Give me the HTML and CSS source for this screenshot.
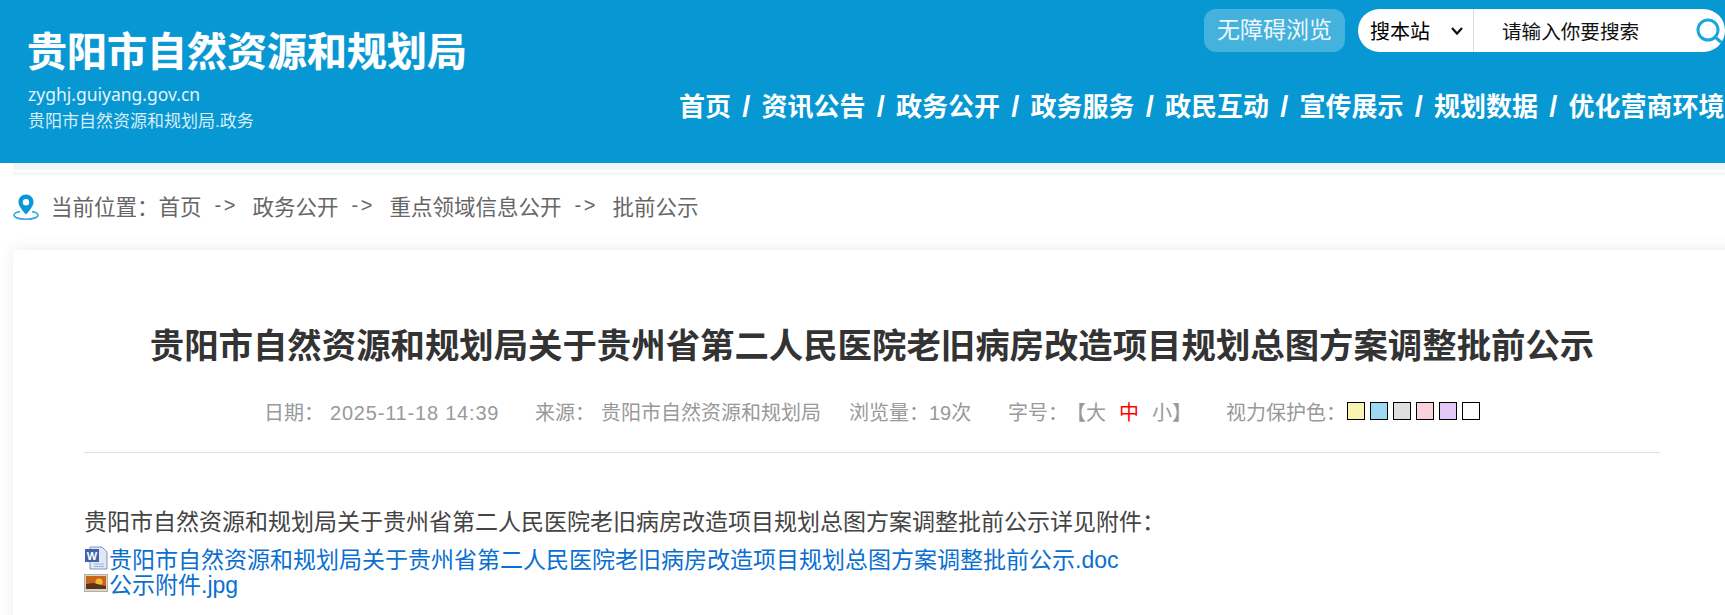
FILE: index.html
```html
<!DOCTYPE html>
<html lang="zh-CN">
<head>
    <meta charset="UTF-8">
    <meta name="viewport" content="width=device-width, initial-scale=1.0">
    <title>贵阳市自然资源和规划局</title>
    <link rel="stylesheet" href="styles.css">
</head>
<body>

<div class="header">
    <div class="logo">
        <div class="logo-name">贵阳市自然资源和规划局</div>
        <div class="logo-url">zyghj.guiyang.gov.cn</div>
        <div class="logo-sub">贵阳市自然资源和规划局.政务</div>
    </div>
    <div class="header-right">
        <div class="tools">
            <a class="access-btn">无障碍浏览</a>
            <div class="search">
                <select class="search-scope">
                    <option>搜本站</option>
                </select>
                <svg class="chevron" width="14" height="10" viewBox="0 0 14 10">
                    <path d="M2 2 L7 7.5 L12 2" fill="none" stroke="#111" stroke-width="2.2"/>
                </svg>
                <input class="search-input" type="text" placeholder="请输入你要搜索">
                <svg class="search-icon" width="30" height="30" viewBox="0 0 30 30">
                    <circle cx="13" cy="14" r="10" fill="none" stroke="#1ba6de" stroke-width="3"/>
                    <path d="M20 21 L27 27" stroke="#1ba6de" stroke-width="3" stroke-linecap="round"/>
                </svg>
            </div>
        </div>
        <div class="nav">
            <a>首页</a><i>/</i>
            <a>资讯公告</a><i>/</i>
            <a>政务公开</a><i>/</i>
            <a>政务服务</a><i>/</i>
            <a>政民互动</a><i>/</i>
            <a>宣传展示</a><i>/</i>
            <a>规划数据</a><i>/</i>
            <a>优化营商环境</a>
        </div>
    </div>
</div>

<div class="stripes"></div>

<div class="crumbs">
    <svg class="pin" width="26" height="26" viewBox="0 0 26 26">
        <path d="M13 0.5 C8.6 0.5 5.5 3.8 5.5 8 C5.5 12.4 10.4 17.6 13 20.5 C15.6 17.6 20.5 12.4 20.5 8 C20.5 3.8 17.4 0.5 13 0.5 Z M13 5 A3.2 3.2 0 1 1 13 11.4 A3.2 3.2 0 1 1 13 5 Z" fill="#0a98d6" fill-rule="evenodd"/>
        <path d="M7 17.5 C3.4 18.3 1 19.6 1 21.2 C1 23.6 6.4 25.2 13 25.2 C19.6 25.2 25 23.6 25 21.2 C25 19.6 22.6 18.3 19 17.5" fill="none" stroke="#2fa9de" stroke-width="1.6"/>
    </svg>
    <span>当前位置：</span><a>首页</a>
    <span class="arrow">-&gt;</span><a>政务公开</a>
    <span class="arrow">-&gt;</span><a>重点领域信息公开</a>
    <span class="arrow">-&gt;</span><a>批前公示</a>
</div>

<div class="card">
    <h1 class="title">贵阳市自然资源和规划局关于贵州省第二人民医院老旧病房改造项目规划总图方案调整批前公示</h1>
    <div class="meta">
        <span class="date"><em>日期：</em><u>2025-11-18 14:39</u></span>
        <span class="source"><em>来源：</em>贵阳市自然资源和规划局</span>
        <span class="views">浏览量：19次</span>
        <span class="size"><em>字号：</em>【大<b>中</b>小】</span>
        <span class="eye">视力保护色：</span>
        <div class="swatches">
            <a class="swatch yellow"></a>
            <a class="swatch blue"></a>
            <a class="swatch grey"></a>
            <a class="swatch pink"></a>
            <a class="swatch purple"></a>
            <a class="swatch white"></a>
        </div>
    </div>
    <p class="intro">贵阳市自然资源和规划局关于贵州省第二人民医院老旧病房改造项目规划总图方案调整批前公示详见附件：</p>
    <div class="files">
        <div class="file">
            <svg width="24" height="24" viewBox="0 0 24 24">
                <path d="M6 1 H18 L23 6 V23 H6 Z" fill="#dfe8f5" stroke="#7f95bd"/>
                <path d="M10 18 H20 M10 20.5 H20" stroke="#9fb3d4"/>
                <rect x="1" y="3" width="14" height="13" fill="#3f62ab"/>
                <text class="word-mark" x="8" y="13.5" text-anchor="middle">W</text>
            </svg>
            <a>贵阳市自然资源和规划局关于贵州省第二人民医院老旧病房改造项目规划总图方案调整批前公示.doc</a>
        </div>
        <div class="file">
            <svg width="24" height="18" viewBox="0 0 24 18">
                <rect x="0.5" y="0.5" width="23" height="17" fill="#d9d5cc" stroke="#b3b0a8"/>
                <rect x="2" y="2" width="20" height="13" fill="#c9661c"/>
                <circle cx="15" cy="8" r="3.5" fill="#f7b93a"/>
                <path d="M2 15 V10 L9 9 L22 12 V15 Z" fill="#5a3418"/>
            </svg>
            <a>公示附件.jpg</a>
        </div>
    </div>
</div>

</body>
</html>
```

FILE: styles.css
```css
html, body {
    height: 100%;
    overflow: hidden;
}
body {
    margin: 0;
    background-color: #fff;
    font-family: "Liberation Sans", "Noto Sans CJK SC", sans-serif;
    color: #333;
}
a {
    text-decoration: none;
}

/* header */
.header {
    display: flex;
    justify-content: space-between;
    height: 163px;
    background-color: #0797d2;
    color: #fff;
    overflow: hidden;
}
.logo {
    padding: 27px 0 0 27px;
}
.logo-name {
    font-size: 40px;
    line-height: 50px;
    font-weight: 700;
    white-space: nowrap;
    text-shadow: 0 0 1px rgba(255, 255, 255, 0.7);
}
.logo-url {
    margin: 5px 0 0 1px;
    font-family: "Noto Sans", sans-serif;
    font-size: 17.5px;
    line-height: 24px;
    color: #e4f4fb;
}
.logo-sub {
    margin: 4px 0 0 1px;
    font-size: 17px;
    line-height: 24px;
    color: #d5eef9;
}
.header-right {
    flex: none;
    width: 1046px;
}
.tools {
    display: flex;
    gap: 13px;
    margin: 9px 0 0 525px;
}
.access-btn {
    flex: none;
    width: 141px;
    height: 43px;
    line-height: 43px;
    text-align: center;
    font-size: 23px;
    color: #eef8fc;
    background-color: rgba(255, 255, 255, 0.25);
    border-radius: 12px;
}
.search {
    flex: none;
    display: flex;
    align-items: center;
    width: 367px;
    height: 43px;
    background-color: #fff;
    border-radius: 22px;
    overflow: hidden;
}
.search-scope {
    flex: none;
    width: 92px;
    height: 43px;
    padding-left: 12px;
    border: none;
    background-color: transparent;
    appearance: none;
    font-family: "Noto Sans CJK SC", sans-serif;
    font-size: 20px;
    color: #000;
}
.chevron {
    flex: none;
    margin-right: 9px;
}
.search-input {
    flex: none;
    width: 220px;
    height: 43px;
    padding: 0 0 0 28px;
    box-sizing: border-box;
    border: none;
    border-left: 1px solid #ddd;
    font-family: "Noto Sans CJK SC", sans-serif;
    font-size: 19.6px;
    color: #000;
}
.search-input::placeholder {
    color: #111;
}
.search-icon {
    flex: none;
    margin-left: 2px;
}
.nav {
    display: flex;
    align-items: center;
    margin-top: 37px;
    font-size: 26px;
    line-height: 36px;
    font-weight: 700;
    white-space: nowrap;
}
.nav i {
    width: 30.5px;
    text-align: center;
    font-style: normal;
    font-size: 29px;
}

/* strip under the header */
.stripes {
    height: 7px;
    margin-left: 13px;
    background-color: #f2f5f8;
    border-bottom: 2px solid #fff;
    box-shadow: 0 3px 0 #f5f6f8;
}

/* breadcrumb */
.crumbs {
    display: flex;
    align-items: center;
    box-sizing: border-box;
    height: 78px;
    padding: 0 0 12px 13px;
    font-size: 21.5px;
    color: #666;
    white-space: nowrap;
}
.pin {
    margin: 3px 12px 0 0;
}
.arrow {
    margin: 0 15px 0 13px;
    width: 23px;
    font-size: 20px;
    letter-spacing: 2.5px;
}

/* article */
.card {
    margin: 0 -20px 0 13px;
    padding: 71px 85px 0 71px;
    min-height: 400px;
    background-color: #fff;
    box-shadow: 0 0 14px rgba(60, 90, 160, 0.12);
}
.title {
    margin: 0;
    width: 1576px;
    text-align: center;
    font-size: 34.4px;
    line-height: 50px;
    font-weight: 700;
    color: #333;
    white-space: nowrap;
}
.meta {
    display: flex;
    align-items: center;
    width: 1576px;
    height: 82px;
    padding: 2px 0 3px 180px;
    box-sizing: border-box;
    border-bottom: 1px solid #ddd;
    font-size: 20px;
    color: #999;
    white-space: nowrap;
}
.meta em {
    font-style: normal;
    margin-right: 6px;
}
.meta u {
    text-decoration: none;
    letter-spacing: 0.8px;
}
.meta .date {
    width: 271px;
}
.meta .source {
    width: 314px;
}
.meta .views {
    width: 159px;
}
.meta .size {
    width: 218px;
}
.meta .size em {
    margin-right: 8px;
}
.meta b {
    margin: 0 13px;
    font-weight: 400;
    color: #f00;
}
.meta .eye {
    width: 121px;
}
.swatches {
    display: flex;
    gap: 5px;
}
.swatch {
    width: 16px;
    height: 16px;
    border: 1px solid #000;
}
.yellow {
    background-color: #f8f5b0;
}
.blue {
    background-color: #9dd9f5;
}
.grey {
    background-color: #dfdfdf;
}
.pink {
    background-color: #fad2dc;
}
.purple {
    background-color: #e3c8f5;
}
.white {
    background-color: #fff;
}
.intro {
    margin: 52px 0 0;
    font-size: 23px;
    line-height: 34px;
    color: #444;
    white-space: nowrap;
}
.files {
    margin-top: 6px;
}
.file {
    display: flex;
    align-items: center;
    gap: 1px;
    height: 25px;
    font-size: 23px;
    white-space: nowrap;
}
.file a {
    color: #0b6fd0;
}
.word-mark {
    font-size: 11px;
    font-weight: 700;
    fill: #fff;
}
```
